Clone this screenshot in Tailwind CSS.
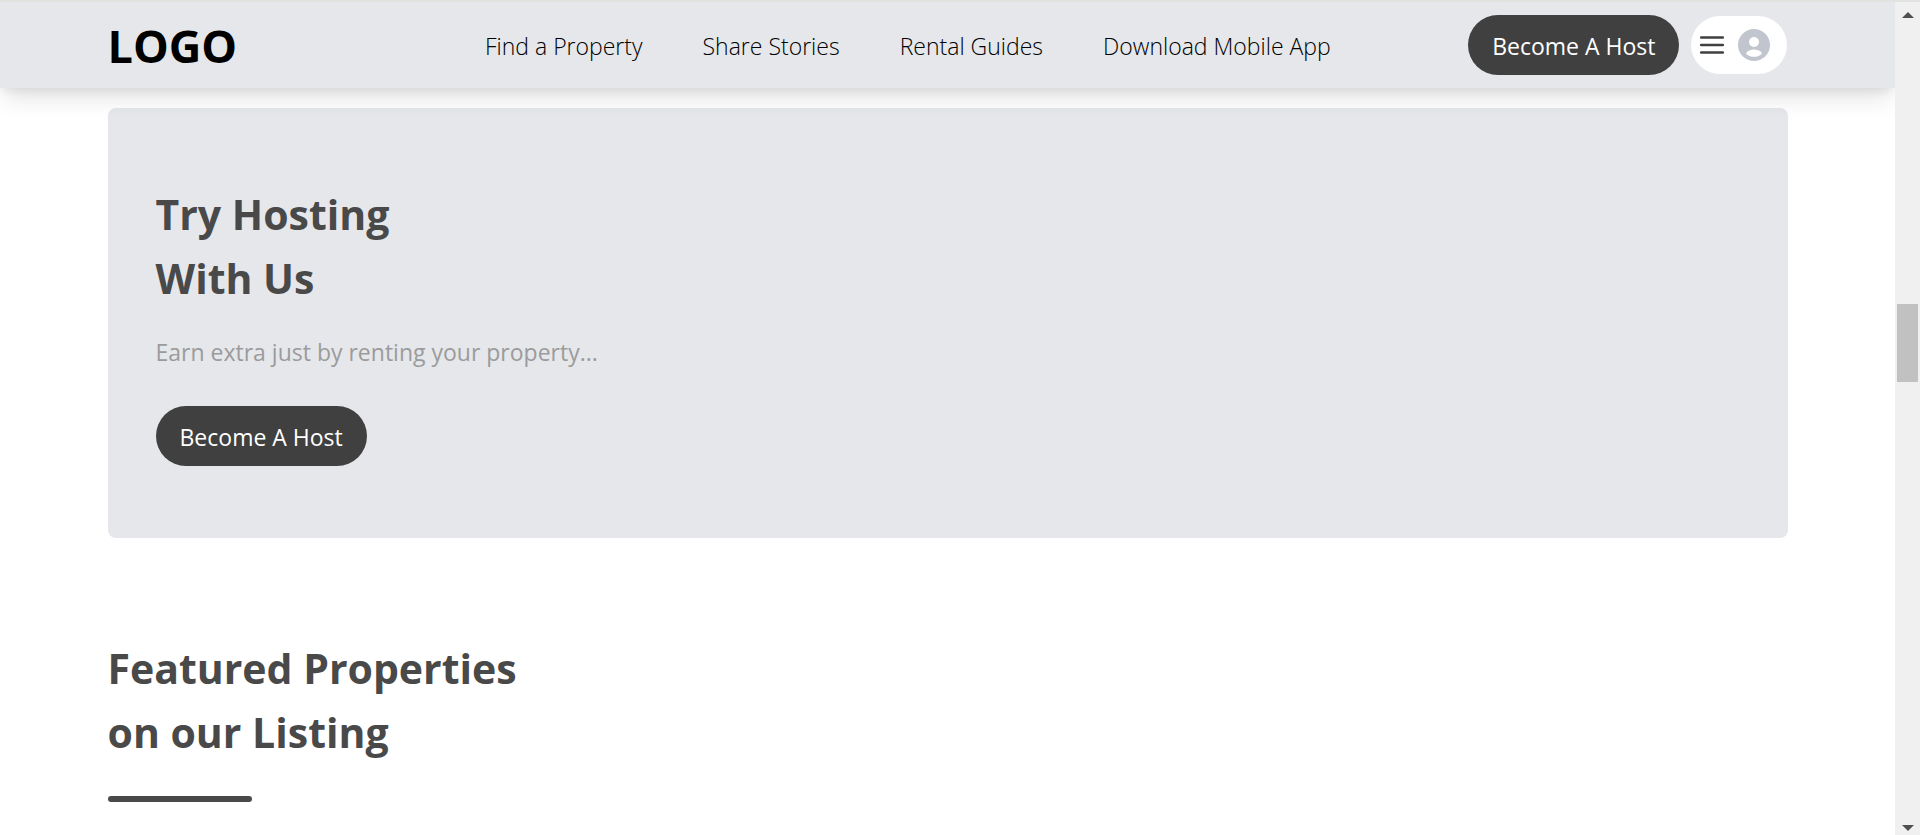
<!DOCTYPE html>
<html lang="en">
<head>
    <meta charset="UTF-8">
    <meta name="viewport" content="width=device-width, initial-scale=1.0">
    <title>Rental Properties</title>
    <script src="https://cdn.jsdelivr.net/npm/@tailwindcss/browser@4"></script>
</head>
<body class="flex h-screen flex-col overflow-hidden border-t-2 border-[#e1e3e1] bg-white font-['Segoe_UI','Open_Sans',sans-serif] text-[23px] text-black">
    <div class="flex min-h-0 flex-1">
        <div class="min-w-0 flex-1 overflow-hidden">
            <header class="relative z-10 bg-gray-200 shadow-[0_15px_22px_-4px_rgba(0,0,0,0.1),0_6px_9px_-3px_rgba(0,0,0,0.08)]">
                <div class="mx-auto flex h-[86px] max-w-[1680px] items-center justify-between">
                    <a href="#" class="w-60 pt-[2px] text-[45px] leading-[64px] font-bold">LOGO</a>
                    <nav class="flex items-center gap-[60px] pt-[2px] font-light whitespace-nowrap">
                        <a href="#">Find a Property</a>
                        <a href="#">Share Stories</a>
                        <a href="#">Rental Guides</a>
                        <a href="#">Download Mobile App</a>
                    </nav>
                    <div class="flex items-center gap-3">
                        <button type="button" class="h-[60px] rounded-full bg-[#404040] px-6 pt-[2px] whitespace-nowrap text-white">Become A Host</button>
                        <button type="button" aria-label="Account menu" class="flex h-[58px] w-24 items-center gap-[14px] rounded-full bg-white pl-[9px]">
                            <svg class="h-6 w-6" viewBox="0 0 24 24" fill="none" stroke="#404040" stroke-width="2.400" stroke-linecap="round">
                                <path d="M1 4.500h22M1 12h22M1 19.500h22"/>
                            </svg>
                            <svg class="h-8 w-8" viewBox="0 0 32 32">
                                <circle cx="16" cy="16" r="16" fill="#c1c5cd"/>
                                <circle cx="16" cy="13" r="5" fill="#fff"/>
                                <path d="M8 24.400c1.300-2.600 4.800-3.800 8-3.800s6.700 1.200 8 3.800c-2 2.300-4.800 3.400-8 3.400s-6-1.100-8-3.400z" fill="#fff"/>
                            </svg>
                        </button>
                    </div>
                </div>
            </header>

            <main class="mx-auto max-w-[1680px]">
                <!-- hosting banner -->
                <section class="mt-5 rounded-lg bg-gray-200 px-12 py-[72px]">
                    <h1 class="pt-[2px] text-[41px] leading-[64px] font-bold text-[#494949]">Try Hosting <br> With Us</h1>
                    <p class="mt-6 leading-9 text-[#9b9b9b]">Earn extra just by renting your property...</p>
                    <button type="button" class="mt-9 h-[60px] rounded-full bg-[#404040] px-6 pt-[2px] text-white">Become A Host</button>
                </section>

                <!-- featured properties -->
                <section class="mt-[98px]">
                    <h1 class="text-[41px] leading-[64px] font-bold text-[#494949]">Featured Properties <br> on our Listing</h1>
                    <div class="mt-8 h-[6px] w-36 rounded-full bg-[#494949]"></div>
                </section>
            </main>
        </div>

        <!-- scrollbar -->
        <div class="flex w-[25px] flex-col items-center bg-[#f0f0f0]" aria-hidden="true">
            <svg class="mt-[10px] h-[6px] w-3 shrink-0" viewBox="0 0 12 6"><path d="M0 6 6 0l6 6z" fill="#505050"/></svg>
            <div class="flex w-full flex-1 flex-col px-[2px]">
                <div class="flex-[286]"></div>
                <div class="h-[78px] bg-[#c1c1c1]"></div>
                <div class="flex-[443]"></div>
            </div>
            <svg class="mb-1 h-[6px] w-3 shrink-0" viewBox="0 0 12 6"><path d="M0 0h12L6 6z" fill="#505050"/></svg>
        </div>
    </div>
</body>
</html>
